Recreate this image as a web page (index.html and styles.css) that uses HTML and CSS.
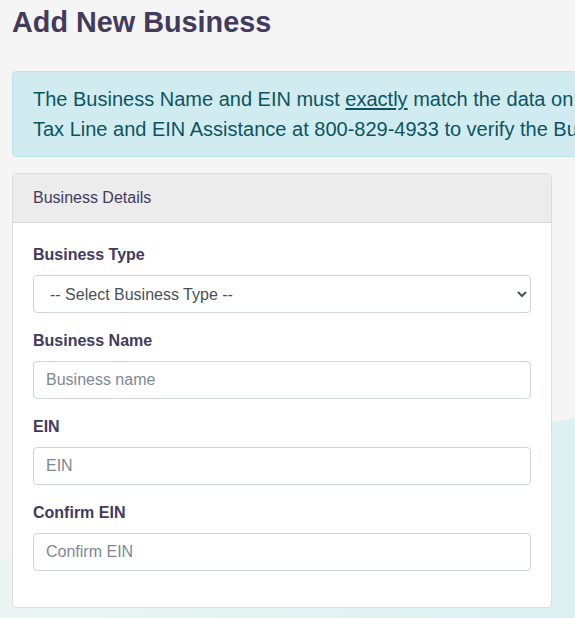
FILE: index.html
```html
<!DOCTYPE html>
<html lang="en">
<head>
<meta charset="utf-8">
<title>Add New Business</title>
<link rel="stylesheet" href="styles.css">
</head>
<body>
<svg class="bg-wave" width="575" height="618" viewBox="0 0 575 618" preserveAspectRatio="none" aria-hidden="true">
  <defs>
    <linearGradient id="wg" x1="0" y1="0" x2="1" y2="0">
      <stop offset="0" stop-color="#ebf4f3"/>
      <stop offset="1" stop-color="#dcf0f2"/>
    </linearGradient>
  </defs>
  <path d="M0 560 C 180 520, 380 455, 575 418 L575 618 L0 618 Z" fill="url(#wg)"/>
</svg>
<main class="page">
  <h1 class="page-title">Add New Business</h1>
  <div class="alert-info">The Business Name and EIN must <u>exactly</u> match the data on file with the IRS. Please call the IRS Business &amp; Specialty<br>Tax Line and EIN Assistance at 800-829-4933 to verify the Business Name and EIN.</div>
  <section class="card">
    <div class="card-header">Business Details</div>
    <div class="card-body">
      <div class="form-group">
        <label class="form-label" for="btype">Business Type</label>
        <select id="btype" class="form-control form-select">
          <option>-- Select Business Type --</option>
        </select>
      </div>
      <div class="form-group">
        <label class="form-label" for="bname">Business Name</label>
        <input id="bname" class="form-control" type="text" placeholder="Business name">
      </div>
      <div class="form-group">
        <label class="form-label" for="ein">EIN</label>
        <input id="ein" class="form-control" type="text" placeholder="EIN">
      </div>
      <div class="form-group">
        <label class="form-label" for="cein">Confirm EIN</label>
        <input id="cein" class="form-control" type="text" placeholder="Confirm EIN">
      </div>
    </div>
  </section>
</main>
</body>
</html>
```

FILE: styles.css
```css
html, body {
  margin: 0;
  padding: 0;
  overflow: hidden;
}
body {
  background: #f5f5f5;
  font-family: "Liberation Sans", Arial, sans-serif;
  color: #433a5c;
  position: relative;
  min-height: 618px;
}
.bg-wave {
  position: absolute;
  left: 0;
  top: 0;
  z-index: 0;
}
.page {
  position: relative;
  z-index: 1;
  padding: 5px 12px 0 12px;
  width: 540px;
}
.page-title {
  margin: 0 0 32px 0;
  font-size: 28.8px;
  line-height: 34px;
  font-weight: 700;
  color: #433a5c;
}
.alert-info {
  width: 1100px;
  background: #d1ecf1;
  border: 1px solid #bee5eb;
  border-radius: 4px;
  color: #0c5460;
  font-size: 20px;
  line-height: 30px;
  padding: 12px 20px;
  white-space: nowrap;
  margin-bottom: 16px;
}
.alert-info u {
  text-decoration-thickness: 2px;
  text-underline-offset: 2px;
}
.card {
  background: #fff;
  border: 1px solid #dcdcdc;
  border-radius: 4px;
  overflow: hidden;
}
.card-header {
  background: #ececec;
  border-bottom: 1px solid #d6d6d6;
  padding: 12px 20px;
  font-size: 16px;
  line-height: 24px;
  color: #433a5c;
}
.card-body {
  padding: 20px 20px 20px 20px;
}
.form-group {
  margin-bottom: 16px;
}
.form-label {
  display: block;
  font-weight: 700;
  font-size: 16px;
  line-height: 24px;
  margin-bottom: 8px;
  color: #433a5c;
}
.form-control {
  display: block;
  box-sizing: border-box;
  width: 100%;
  height: 38px;
  padding: 6px 12px;
  font-family: "Liberation Sans", Arial, sans-serif;
  font-size: 16px;
  line-height: 24px;
  color: #495057;
  background: #fff;
  border: 1px solid #ced4da;
  border-radius: 4px;
  margin: 0;
}
.form-control::placeholder {
  color: #7d8894;
  opacity: 1;
}
.form-select {
  padding: 6px 8px 6px 12px;
}
```
